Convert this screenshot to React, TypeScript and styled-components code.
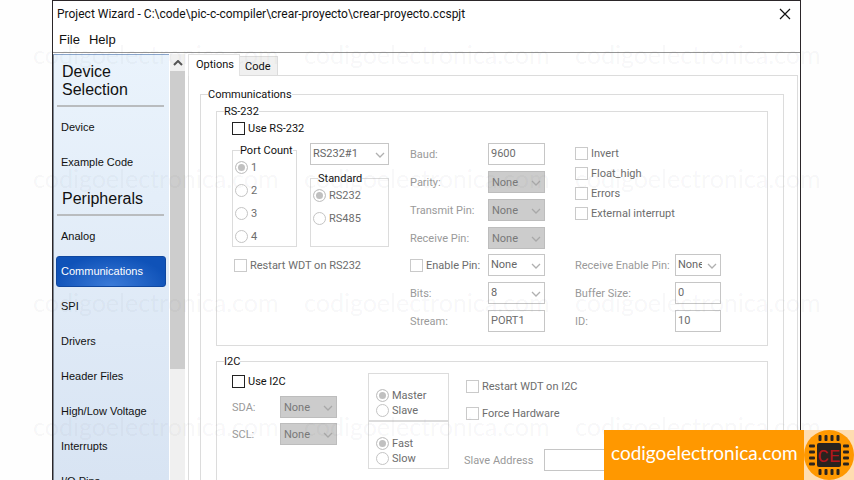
import React, { useId, useState } from "react";
import styled, { createGlobalStyle } from "styled-components";

const GlobalStyle = createGlobalStyle`
  *, *::before, *::after { box-sizing: border-box; }
  body {
    margin: 0;
    background: #fefefe;
    font-family: Roboto, "Liberation Sans", sans-serif;
    font-size: 11px;
    line-height: 13px;
    color: #111;
  }
  button, input, select { font: inherit; color: inherit; margin: 0; }
`;

const Page = styled.div`
  position: relative;
  height: 100vh;
  overflow: hidden;
  padding: 0 53px 0 52px;
`;

const Window = styled.main`
  display: flex;
  flex-direction: column;
  height: 100%;
  background: #fff;
  border: 1px solid #2b2629;
  border-bottom: 0;
`;

const TitleBar = styled.header`
  display: flex;
  align-items: center;
  justify-content: space-between;
  height: 25px;
  padding: 0 9px 0 4px;
`;

const Title = styled.h1`
  margin: 0;
  font: 400 12px/16px Roboto, "Segoe UI", sans-serif;
  white-space: nowrap;
`;

const CloseButton = styled.button`
  display: flex;
  padding: 0;
  border: 0;
  background: none;
`;

const MenuBar = styled.nav`
  display: flex;
  gap: 9px;
  height: 27px;
  padding: 6px 6px 0;
  border-bottom: 1px solid #969696;
`;

const MenuItem = styled.button`
  height: 16px;
  padding: 0;
  border: 0;
  background: none;
  font: 13px/16px "Liberation Sans", Arial, sans-serif;
`;

const Body = styled.div`
  display: flex;
  flex: 1;
  min-height: 0;
  padding: 1px 2px 0 0;
`;

const Sidebar = styled.aside`
  flex: 0 0 116px;
  min-height: 0;
  overflow: hidden;
  margin-right: 1px;
  padding: 1px 3px 0 2px;
  border-top: 1px solid #8aa6cc;
  border-left: 1px solid #7d8794;
  background: linear-gradient(#eaf3fc, #d8e4f3);
  font-family: "Liberation Sans", Arial, sans-serif;
`;

const SideHeading = styled.h2`
  margin: 0 2px 0 1px;
  padding: 7px 5px 6px;
  border-bottom: 2px solid #b9bcbf;
  font-size: 16px;
  font-weight: 400;
  line-height: 18px;
`;

const SideList = styled.div`
  display: flex;
  flex-direction: column;
  gap: 4px;
  padding: 5px 0;
`;

const SideItem = styled.button<{ $active?: boolean }>`
  flex: 0 0 31px;
  padding: 0 4px;
  border: 1px solid ${(p) => (p.$active ? "#0f479f" : "transparent")};
  border-radius: 3px;
  background: ${(p) =>
    p.$active ? "radial-gradient(ellipse at 50% 100%, #3b7bd8, #0f52b8 75%)" : "none"};
  color: ${(p) => (p.$active ? "#fff" : "#111")};
  text-align: left;
  white-space: nowrap;
`;

const ScrollTrack = styled.div`
  display: flex;
  flex-direction: column;
  flex: 0 0 15px;
  background: #f0f0f0;
`;

const ScrollUp = styled.button`
  display: flex;
  align-items: center;
  justify-content: center;
  height: 17px;
  padding: 0;
  border: 0;
  background: #f0f0f0;
`;

const ScrollThumb = styled.div`
  height: 70%;
  background: #cdcdcd;
`;

const Content = styled.section`
  display: flex;
  flex-direction: column;
  flex: 1;
  min-width: 0;
  padding-left: 3px;
`;

const TabBar = styled.div`
  display: flex;
  align-items: flex-end;
  height: 21px;
`;

const Tab = styled.button<{ $active: boolean }>`
  height: ${(p) => (p.$active ? 22 : 19)}px;
  margin-bottom: ${(p) => (p.$active ? -1 : 0)}px;
  padding: ${(p) => (p.$active ? "0 5px 2px 7px" : "0 6px 0 5px")};
  border: 1px solid ${(p) => (p.$active ? "#e2e2e2" : "#dcdcdc")};
  border-bottom: 0;
  border-left-width: ${(p) => (p.$active ? 1 : 0)}px;
  background: ${(p) => (p.$active ? "#fff" : "#f0f0f0")};
  z-index: ${(p) => (p.$active ? 1 : 0)};
`;

const TabPanel = styled.div`
  flex: 1;
  min-height: 0;
  overflow: hidden;
  padding: 12px 13px 0 11px;
  border: 1px solid #dcdcdc;
  border-bottom: 0;
`;

const Group = styled.fieldset<{ $grow?: boolean }>`
  flex: ${(p) => (p.$grow ? "1" : "none")};
  min-width: 0;
  margin: 0;
  padding: 0;
  border: 1px solid #dcdcdc;
`;

const Legend = styled.legend`
  height: 13px;
  margin-left: 7px;
  padding: 0;
  white-space: nowrap;
`;

const GroupStack = styled.div`
  display: flex;
  flex-direction: column;
  gap: 9px;
  padding: 4px 15px 0;
`;

const SerialBody = styled.div`
  padding: 4px 15px 13px;
`;

const SerialRow = styled.div<{ $gap: number }>`
  display: grid;
  grid-template-columns: 157px 135px auto;
  column-gap: 21px;
  justify-content: start;
  margin-top: ${(p) => p.$gap}px;
`;

const PortColumns = styled.div`
  display: grid;
  grid-template-columns: 65px 1fr;
  column-gap: 13px;
  height: 104px;
`;

const PortGroup = styled.div`
  padding-top: 1px;
`;

const StandardColumn = styled.div`
  display: flex;
  flex-direction: column;
  gap: 7px;
`;

const RestartCell = styled.div`
  padding: 5px 0 0 2px;
`;

const SideFields = styled.div`
  padding-left: 9px;
`;

const FlagList = styled.div`
  display: flex;
  flex-direction: column;
  gap: 7px;
  padding: 4px 0 0 9px;
`;

const RadioList = styled.div<{ $tight?: boolean }>`
  display: flex;
  flex-direction: column;
  gap: ${(p) => (p.$tight ? 2 : 10)}px;
  padding: ${(p) => (p.$tight ? "15px 7px 3px" : "4px 2px 3px")};
`;

const Fields = styled.div<{ $label: number; $control: number; $gap?: number }>`
  display: grid;
  grid-template-columns: ${(p) => p.$label}px ${(p) => p.$control}px;
  grid-auto-rows: 22px;
  row-gap: ${(p) => p.$gap ?? 6}px;
  align-items: center;
  align-content: start;
`;

const FieldLabel = styled.label`
  color: #9a9a9a;
  white-space: nowrap;
`;

const CheckLabel = styled.label<{ $muted?: boolean }>`
  display: flex;
  align-items: center;
  gap: 3px;
  height: 13px;
  color: ${(p) => (p.$muted ? "#6d6d6d" : "#111")};
  white-space: nowrap;
`;

const CheckInput = styled.input`
  appearance: none;
  flex: none;
  width: 13px;
  height: 13px;
  border: 1px solid #222;
  background: #fff;

  &:checked { background: #222; box-shadow: inset 0 0 0 2px #fff; }
  &:disabled { border-color: #cacaca; }
`;

const RadioInput = styled.input`
  appearance: none;
  flex: none;
  width: 13px;
  height: 13px;
  border: 1px solid #c4c4c4;
  border-radius: 50%;
  background: #fff;

  &:checked { background: #c0c0c0; box-shadow: inset 0 0 0 2px #fff; }
`;

const TextInput = styled.input`
  width: 100%;
  height: 22px;
  padding: 0 2px 2px;
  border: 1px solid #c6c6c6;
  border-radius: 0;
  background: #fff;
  color: #6d6d6d;
`;

const SelectBox = styled.span<{ $filled?: boolean }>`
  display: grid;
  align-items: center;
  height: 22px;
  border: 1px solid ${(p) => (p.$filled ? "#bdbdbd" : "#c6c6c6")};
  background: ${(p) => (p.$filled ? "#cccccc" : "#fff")};

  & > * { grid-area: 1 / 1; }
  & > svg { justify-self: end; margin: 2px 3px 0 0; pointer-events: none; }
`;

const SelectInput = styled.select<{ $filled?: boolean }>`
  appearance: none;
  width: 100%;
  height: 20px;
  padding: ${(p) => (p.$filled ? "0 18px 0 3px" : "0 18px 2px 2px")};
  border: 0;
  border-radius: 0;
  background: none;
  color: ${(p) => (p.$filled ? "#787878" : "#666")};
  opacity: 1;
  overflow: hidden;
`;

const BusBody = styled.div`
  display: grid;
  grid-template-columns: 121px 81px auto;
  column-gap: 15px;
  justify-content: start;
  padding: 5px 15px 12px;
`;

const BusPins = styled.div`
  display: flex;
  flex-direction: column;
  gap: 8px;
  padding-top: 2px;
`;

const BusFlags = styled.div`
  display: flex;
  flex-direction: column;
  gap: 14px;
  padding: 7px 2px 0;
`;

const BusAddress = styled.div`
  margin-top: 29px;
`;

const Watermarks = styled.div`
  position: absolute;
  inset: 0;
  display: grid;
  grid-template-columns: repeat(3, 271px);
  grid-auto-rows: 124px;
  padding: 39px 0 0 33px;
  overflow: hidden;
  color: rgba(60, 60, 70, 0.05);
  font: 400 25px/30px Lato, sans-serif;
  pointer-events: none;
`;

const Banner = styled.footer`
  position: absolute;
  right: 0;
  bottom: 0;
  display: flex;
  width: 250px;
  height: 50px;
  background: #ff9800;

  & > svg { flex: none; }
`;

const BannerLink = styled.a`
  flex: 1;
  min-width: 0;
  padding-left: 7px;
  color: #fff;
  font: 400 19px/46px Lato, sans-serif;
  text-decoration: none;
`;

function Chevron({ up, color = "#b0b0b0" }: { up?: boolean; color?: string }) {
  return (
    <svg width="10" height="6" viewBox="0 0 10 6" fill="none" aria-hidden="true">
      <path d={up ? "M1 5L5 1L9 5" : "M1 1L5 5L9 1"} stroke={color} strokeWidth={up ? 2 : 1.3} />
    </svg>
  );
}

function Check({ text, disabled }: { text: string; disabled?: boolean }) {
  return (
    <CheckLabel $muted={disabled}>
      <CheckInput type="checkbox" disabled={disabled} />
      {text}
    </CheckLabel>
  );
}

function Radios({ name, options, tight }: { name: string; options: string[]; tight?: boolean }) {
  return (
    <RadioList $tight={tight}>
      {options.map((option, i) => (
        <CheckLabel key={option} $muted>
          <RadioInput type="radio" name={name} defaultChecked={i === 0} disabled />
          {option}
        </CheckLabel>
      ))}
    </RadioList>
  );
}

type SelectProps = { id?: string; value: string; filled?: boolean; label?: string };

function Select({ id, value, filled, label }: SelectProps) {
  return (
    <SelectBox $filled={filled}>
      <SelectInput id={id} aria-label={label} $filled={filled} disabled>
        <option>{value}</option>
      </SelectInput>
      <Chevron color={filled ? "#a8a8a8" : "#b0b0b0"} />
    </SelectBox>
  );
}

type FieldProps = { label: string; value: string; kind?: "text" | "select" | "filled" };

function Field({ label, value, kind = "text" }: FieldProps) {
  const id = useId();
  return (
    <>
      <FieldLabel htmlFor={id}>{label}</FieldLabel>
      {kind === "text" ? (
        <TextInput id={id} type="text" defaultValue={value} disabled />
      ) : (
        <Select id={id} value={value} filled={kind === "filled"} />
      )}
    </>
  );
}

function ChipLogo() {
  const pins = [0, 1, 2, 3];
  return (
    <svg width="50" height="50" viewBox="0 0 50 50" role="img" aria-label="CE">
      <rect width="50" height="50" fill="#ffddb0" />
      <circle cx="25" cy="25" r="25" fill="#ff9800" />
      <g fill="#29231f">
        {pins.map((i) => (
          <React.Fragment key={i}>
            <rect x={14.5 + i * 6} y="5" width="3" height="6" rx="1" />
            <rect x={14.5 + i * 6} y="39" width="3" height="6" rx="1" />
            <rect x="5" y={14.5 + i * 6} width="6" height="3" rx="1" />
            <rect x="39" y={14.5 + i * 6} width="6" height="3" rx="1" />
          </React.Fragment>
        ))}
        <rect x="13" y="13" width="24" height="24" rx="2" />
      </g>
      <text
        x="25"
        y="32"
        fill="#b3161b"
        fontFamily="Liberation Mono, monospace"
        fontSize="19"
        textAnchor="middle"
      >
        CE
      </text>
    </svg>
  );
}

function PortBlock() {
  return (
    <PortColumns>
      <PortGroup>
        <Group>
          <Legend>Port Count</Legend>
          <Radios name="port" options={["1", "2", "3", "4"]} />
        </Group>
      </PortGroup>
      <StandardColumn>
        <Select value="RS232#1" label="Port" />
        <Group $grow>
          <Legend>Standard</Legend>
          <Radios name="standard" options={["RS232", "RS485"]} />
        </Group>
      </StandardColumn>
    </PortColumns>
  );
}

function SerialGroup() {
  return (
    <Group>
      <Legend>RS-232</Legend>
      <SerialBody>
        <Check text="Use RS-232" />
        <SerialRow $gap={8}>
          <PortBlock />
          <Fields $label={78} $control={57}>
            <Field label="Baud:" value="9600" />
            <Field label="Parity:" value="None" kind="filled" />
            <Field label="Transmit Pin:" value="None" kind="filled" />
            <Field label="Receive Pin:" value="None" kind="filled" />
          </Fields>
          <FlagList>
            <Check text="Invert" disabled />
            <Check text="Float_high" disabled />
            <Check text="Errors" disabled />
            <Check text="External interrupt" disabled />
          </FlagList>
        </SerialRow>
        <SerialRow $gap={5}>
          <RestartCell>
            <Check text="Restart WDT on RS232" disabled />
          </RestartCell>
          <Fields $label={78} $control={57}>
            <Check text="Enable Pin:" disabled />
            <Select value="None" label="Enable Pin" />
            <Field label="Bits:" value="8" kind="select" />
            <Field label="Stream:" value="PORT1" />
          </Fields>
          <SideFields>
            <Fields $label={100} $control={46}>
              <Field label="Receive Enable Pin:" value="None" kind="select" />
              <Field label="Buffer Size:" value="0" />
              <Field label="ID:" value="10" />
            </Fields>
          </SideFields>
        </SerialRow>
      </SerialBody>
    </Group>
  );
}

function BusGroup() {
  return (
    <Group>
      <Legend>I2C</Legend>
      <BusBody>
        <BusPins>
          <Check text="Use I2C" />
          <Fields $label={48} $control={57} $gap={5}>
            <Field label="SDA:" value="None" kind="filled" />
            <Field label="SCL:" value="None" kind="filled" />
          </Fields>
        </BusPins>
        <div>
          <Group aria-label="Mode">
            <Radios name="mode" options={["Master", "Slave"]} tight />
          </Group>
          <Group aria-label="Speed">
            <Radios name="speed" options={["Fast", "Slow"]} tight />
          </Group>
        </div>
        <div>
          <BusFlags>
            <Check text="Restart WDT on I2C" disabled />
            <Check text="Force Hardware" disabled />
          </BusFlags>
          <BusAddress>
            <Fields $label={80} $control={80}>
              <Field label="Slave Address" value="" />
            </Fields>
          </BusAddress>
        </div>
      </BusBody>
    </Group>
  );
}

const DEVICE_ITEMS = ["Device", "Example Code"];
const PERIPHERAL_ITEMS = [
  "Analog",
  "Communications",
  "SPI",
  "Drivers",
  "Header Files",
  "High/Low Voltage",
  "Interrupts",
  "I/O Pins",
];
const TABS = ["Options", "Code"];

export default function App() {
  const [section, setSection] = useState("Communications");
  const [tab, setTab] = useState("Options");

  const renderItems = (items: string[]) => (
    <SideList>
      {items.map((item) => (
        <SideItem key={item} $active={item === section} onClick={() => setSection(item)}>
          {item}
        </SideItem>
      ))}
    </SideList>
  );

  return (
    <>
      <GlobalStyle />
      <Page>
        <Window>
          <TitleBar>
            <Title>Project Wizard - C:\code\pic-c-compiler\crear-proyecto\crear-proyecto.ccspjt</Title>
            <CloseButton aria-label="Close">
              <svg width="12" height="12" viewBox="0 0 12 12" aria-hidden="true">
                <path d="M1 1L11 11M11 1L1 11" stroke="#111" strokeWidth="1.2" />
              </svg>
            </CloseButton>
          </TitleBar>
          <MenuBar>
            <MenuItem>File</MenuItem>
            <MenuItem>Help</MenuItem>
          </MenuBar>
          <Body>
            <Sidebar>
              <SideHeading>Device Selection</SideHeading>
              {renderItems(DEVICE_ITEMS)}
              <SideHeading>Peripherals</SideHeading>
              {renderItems(PERIPHERAL_ITEMS)}
            </Sidebar>
            <ScrollTrack>
              <ScrollUp aria-label="Scroll up">
                <Chevron up color="#555" />
              </ScrollUp>
              <ScrollThumb />
            </ScrollTrack>
            <Content>
              <TabBar role="tablist">
                {TABS.map((name) => (
                  <Tab
                    key={name}
                    role="tab"
                    aria-selected={name === tab}
                    $active={name === tab}
                    onClick={() => setTab(name)}
                  >
                    {name}
                  </Tab>
                ))}
              </TabBar>
              <TabPanel role="tabpanel">
                <Group>
                  <Legend>Communications</Legend>
                  <GroupStack>
                    <SerialGroup />
                    <BusGroup />
                  </GroupStack>
                </Group>
              </TabPanel>
            </Content>
          </Body>
        </Window>
        <Watermarks aria-hidden="true">
          {Array.from({ length: 12 }, (_, i) => (
            <span key={i}>codigoelectronica.com</span>
          ))}
        </Watermarks>
        <Banner>
          <BannerLink href="#">codigoelectronica.com</BannerLink>
          <ChipLogo />
        </Banner>
      </Page>
    </>
  );
}
